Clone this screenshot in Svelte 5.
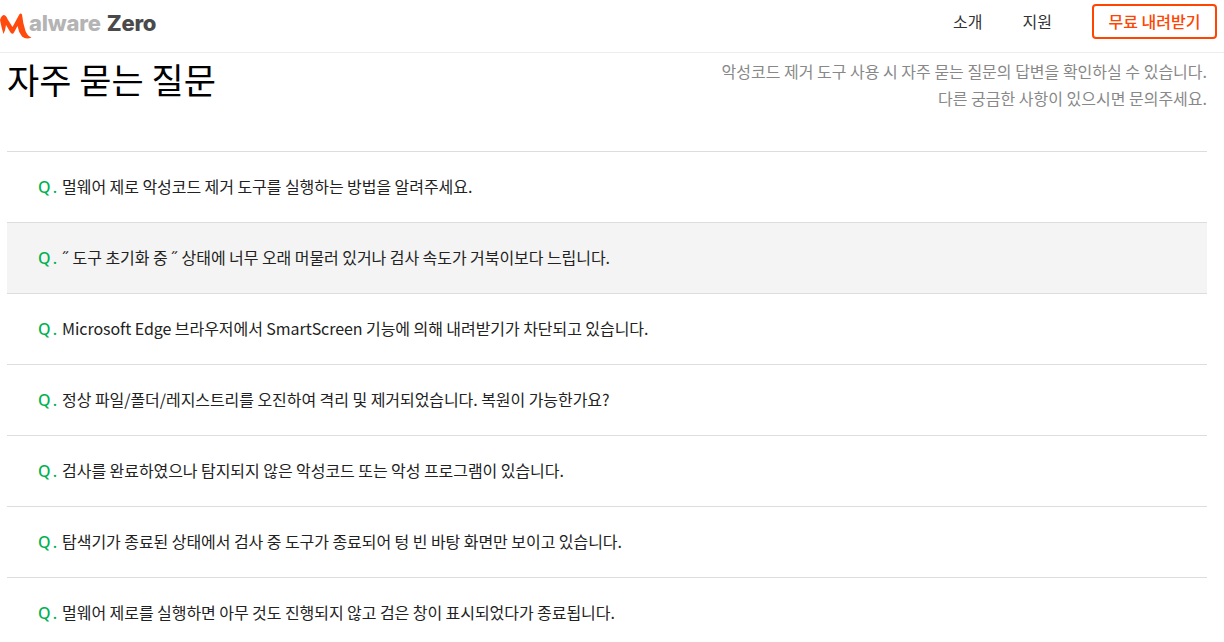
<script>
  const questions = [
    "멀웨어 제로 악성코드 제거 도구를 실행하는 방법을 알려주세요.",
    "˝ 도구 초기화 중 ˝ 상태에 너무 오래 머물러 있거나 검사 속도가 거북이보다 느립니다.",
    "Microsoft Edge 브라우저에서 SmartScreen 기능에 의해 내려받기가 차단되고 있습니다.",
    "정상 파일/폴더/레지스트리를 오진하여 격리 및 제거되었습니다. 복원이 가능한가요?",
    "검사를 완료하였으나 탐지되지 않은 악성코드 또는 악성 프로그램이 있습니다.",
    "탐색기가 종료된 상태에서 검사 중 도구가 종료되어 텅 빈 바탕 화면만 보이고 있습니다.",
    "멀웨어 제로를 실행하면 아무 것도 진행되지 않고 검은 창이 표시되었다가 종료됩니다."
  ];
  const hovered = 1;
</script>

<div class="page">
  <header class="topbar">
    <a class="logo" href="#top">
      <svg class="logo-mark" viewBox="0 0 32 26" width="32" height="26" aria-hidden="true">
        <path d="M0 7 Q1 3 3.5 2 Q6 2 7.5 6 L12.5 14 L19 2 Q20.5 -0.5 22 1.5 Q23 11 25.5 18 Q27.5 23 31.5 24.5 Q26 27 22 23.5 Q18.5 19 17.5 13 L14 19.5 Q12.5 22 10.5 19.5 L6 12 Q5.5 17 3.5 21 Q1.5 15 0 7 Z" fill="#ff4a0d" />
      </svg>
      <span class="logo-light">alware</span>
      <span class="logo-dark">Zero</span>
    </a>
    <nav class="nav">
      <a href="#intro">소개</a>
      <a href="#support">지원</a>
      <a class="download" href="#download">무료 내려받기</a>
    </nav>
  </header>

  <main class="content">
    <section class="heading">
      <h1>자주 묻는 질문</h1>
      <p>악성코드 제거 도구 사용 시 자주 묻는 질문의 답변을 확인하실 수 있습니다.<br />다른 궁금한 사항이 있으시면 문의주세요.</p>
    </section>

    <ul class="faq">
      {#each questions as question, i}
        <li class:active={i === hovered}>
          <span class="q">Q .</span>
          <span class="text">{question}</span>
        </li>
      {/each}
    </ul>
  </main>
</div>

<style>
  :global(body) {
    margin: 0;
    background: #fff;
    font-family: "Noto Sans CJK KR", "Noto Sans", sans-serif;
    overflow: hidden;
  }

  .page {
    height: 642px;
    overflow: hidden;
  }

  .topbar {
    height: 53px;
    box-sizing: border-box;
    display: flex;
    align-items: center;
    justify-content: space-between;
    border-bottom: 1px solid #eee;
    padding: 4px 7px 13px 0;
  }

  .logo {
    display: flex;
    align-items: center;
    text-decoration: none;
    font-family: "Inter", sans-serif;
    font-weight: 800;
    font-size: 22px;
    letter-spacing: -0.2px;
  }

  .logo-mark {
    margin: 9px -3px 0 0;
  }

  .logo-light {
    color: #b4b4b4;
    margin-right: 6px;
    margin-top: 3px;
  }

  .logo-dark {
    color: #4a4a4a;
    margin-top: 3px;
  }

  .nav {
    display: flex;
    align-items: center;
  }

  .nav a {
    color: #333;
    text-decoration: none;
    font-size: 16px;
    margin-right: 40px;
    padding-bottom: 2px;
  }

  .nav .download {
    margin: 0;
    padding: 0 0 2px;
    width: 121px;
    height: 29px;
    display: flex;
    align-items: center;
    justify-content: center;
    border: 2px solid #ff4500;
    border-radius: 4px;
    color: #ff4500;
    font-weight: 500;
  }

  .content {
    padding: 0 17px 0 7px;
  }

  .heading {
    height: 98px;
    display: flex;
    justify-content: space-between;
  }

  h1 {
    margin: -1px 0 0;
    font-size: 35px;
    font-weight: 400;
    line-height: 54px;
    color: #000;
  }

  .heading p {
    margin: 5px 0 0;
    text-align: right;
    font-size: 16px;
    line-height: 27px;
    color: #888;
  }

  .faq {
    list-style: none;
    margin: 0;
    padding: 0;
    border-top: 1px solid #ddd;
  }

  .faq li {
    height: 70px;
    display: flex;
    align-items: center;
    gap: 5px;
    padding-left: 31px;
    border-bottom: 1px solid #ddd;
    font-size: 16px;
    line-height: 24px;
    color: #222;
  }

  .text {
    margin-top: -2px;
    letter-spacing: -0.06px;
  }

  .faq li.active {
    background: #f4f4f4;
  }

  .q {
    color: #00b14f;
    font-family: "Noto Sans", sans-serif;
    font-size: 16px;
    font-weight: 500;
    word-spacing: -2px;
  }
</style>
